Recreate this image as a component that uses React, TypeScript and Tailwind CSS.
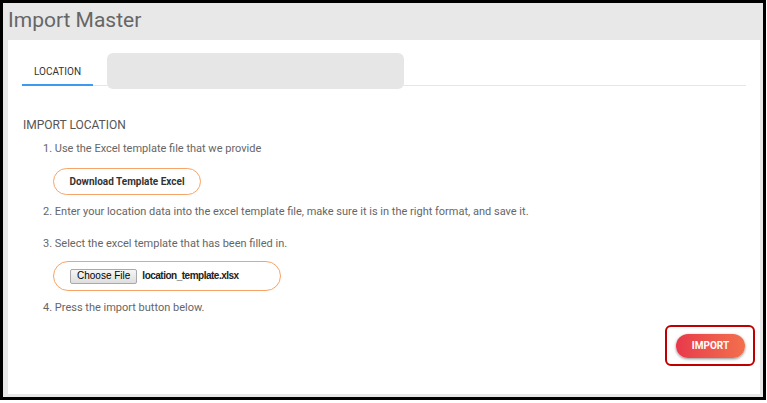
import { useState } from "react";

const steps = {
  one: "1. Use the Excel template file that we provide",
  two: "2. Enter your location data into the excel template file, make sure it is in the right format, and save it.",
  three: "3. Select the excel template that has been filled in.",
  four: "4. Press the import button below.",
};

const ImportMaster = () => {
  const [fileName] = useState("location_template.xlsx");

  return (
    <div className="w-[767px] h-[403px] bg-white font-['Roboto',sans-serif]">
      <div className="w-[766px] h-[400px] border-[3px] border-black bg-[#e8e8e8] flex flex-col">
        {/* Cabeçalho */}
        <div className="h-[37px] pl-[5px] flex items-center">
          <h1 className="text-[21px] leading-none text-[#666] pb-[3px]">Import Master</h1>
        </div>

        {/* Card principal */}
        <div className="relative flex-1 ml-[5px] mr-[3px] mb-[3px] bg-white px-[14px] flex flex-col">
          {/* Abas */}
          <div className="mt-[13px] h-[33px] border-b border-[#e6e6e6] flex">
            <div className="-mb-px h-[33px] px-[12px] pt-[6px] flex items-center border-b-2 border-[#3d9bef] text-[10px] text-[#333]">
              LOCATION
            </div>
          </div>
          <div className="absolute left-[99px] top-[13px] w-[297px] h-[36px] rounded-[6px] bg-[#e6e6e6]" />

          <h2 className="mt-[31px] ml-px text-[12px] leading-[16px] text-[#555]">IMPORT LOCATION</h2>

          <div className="pl-[21px] text-[11px] leading-[16px] text-[#666] flex flex-col">
            <p className="mt-[8px]">{steps.one}</p>
            <div className="mt-[11px] ml-[10px]">
              <button className="w-[148px] h-[27px] rounded-full border-[1.5px] border-[#f6a467] bg-white text-[10px] font-bold text-[#333]">
                Download Template Excel
              </button>
            </div>
            <p className="mt-[9px]">{steps.two}</p>
            <p className="mt-[16px]">{steps.three}</p>
            <div className="mt-[9px] ml-[10px] w-[228px] h-[30px] rounded-full border-[1.5px] border-[#f6a467] flex items-center pl-[16px] gap-[5px] font-['Liberation_Sans',sans-serif]">
              <span className="h-[15px] px-[6px] flex items-center border border-[#a9a9a9] rounded-[2px] bg-gradient-to-b from-[#f6f6f6] to-[#dedede] text-[10px] text-black">
                Choose File
              </span>
              <span className="text-[10px] font-bold tracking-[-0.5px] text-[#222]">{fileName}</span>
            </div>
            <p className="mt-[9px]">{steps.four}</p>
          </div>

          {/* Botão de importar */}
          <div className="flex justify-end mt-[9px] -mr-[9px]">
            <div className="w-[90px] h-[41px] border-2 border-[#c00000] rounded-[6px] flex items-center pl-[9px]">
              <button className="w-[69px] h-[24px] rounded-full bg-gradient-to-r from-[#e8384b] to-[#f26f4c] shadow-[0_1px_3px_rgba(0,0,0,0.45)] text-[10px] font-bold text-white">
                IMPORT
              </button>
            </div>
          </div>
        </div>
      </div>
    </div>
  );
};

export default ImportMaster;
